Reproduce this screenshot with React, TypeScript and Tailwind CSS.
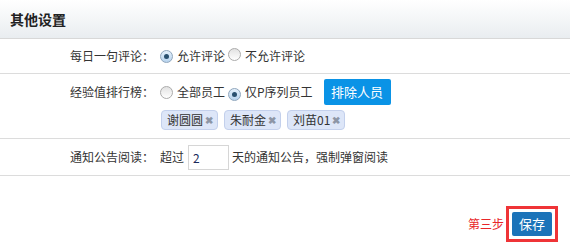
import React from "react";

const font = { fontFamily: '"Noto Sans CJK SC", "Liberation Sans", sans-serif' };

function Radio({ checked }: { checked?: boolean }) {
  return (
    <span
      className={
        checked
          ? "relative inline-flex h-[13px] w-[13px] shrink-0 items-center justify-center rounded-full border border-[#8fa6bd] bg-gradient-to-b from-[#e4f0fb] to-[#b8d4ee]"
          : "relative inline-flex h-[13px] w-[13px] shrink-0 items-center justify-center rounded-full border border-[#ababab] bg-gradient-to-b from-[#e2e2e2] to-white"
      }
    >
      {checked && <span className="h-[5px] w-[5px] rounded-full bg-[#29506f]" />}
    </span>
  );
}

function Tag({ name }: { name: string }) {
  return (
    <span className="inline-flex h-[20px] items-center rounded-[4px] border border-[#c3d0ec] bg-[#dde6f8] pl-[5px] pr-[4px] text-[12px] text-[#333]">
      {name}
      <span className="ml-[2px] text-[10px] font-bold leading-none text-[#8d96a6]">✖</span>
    </span>
  );
}

function Label({ children }: { children: React.ReactNode }) {
  return <div className="w-[154px] shrink-0 text-right">{children}</div>;
}

export default function App() {
  return (
    <div className="h-[248px] w-[570px] bg-white text-[12px] text-[#333]" style={font}>
      {/* header */}
      <div className="flex h-[39px] items-center border-b border-[#d8d8d8] bg-gradient-to-b from-white to-[#e9edf0] pl-[10px]">
        <span className="text-[14px] font-bold text-[#222]">其他设置</span>
      </div>

      {/* 每日一句评论 */}
      <div className="flex h-[35px] items-center border-b border-[#dcdcdc]">
        <Label>每日一句评论：</Label>
        <div className="ml-[6px] flex items-center">
          <Radio checked />
          <span className="ml-[4px]">允许评论</span>
          <span className="ml-[3px]"><Radio /></span>
          <span className="ml-[4px]">不允许评论</span>
        </div>
      </div>

      {/* 经验值排行榜 */}
      <div className="flex border-b border-[#dcdcdc] pb-[8px] pt-[5px]">
        <div className="flex h-[26px] items-center">
          <Label>经验值排行榜：</Label>
        </div>
        <div className="ml-[6px] flex flex-col gap-[5px]">
          <div className="flex h-[26px] items-center">
            <Radio />
            <span className="ml-[4px]">全部员工</span>
            <span className="ml-[3px]"><Radio checked /></span>
            <span className="ml-[4px]">仅P序列员工</span>
            <button className="ml-[11px] h-[26px] w-[67px] rounded-[2px] bg-[#0a93e6] text-[13px] text-white">
              排除人员
            </button>
          </div>
          <div className="flex gap-[6px] pl-[1px]">
            <Tag name="谢圆圆" />
            <Tag name="朱耐金" />
            <Tag name="刘苗01" />
          </div>
        </div>
      </div>

      {/* 通知公告阅读 */}
      <div className="flex h-[37px] items-center border-b border-[#dcdcdc]">
        <Label>通知公告阅读：</Label>
        <div className="ml-[6px] flex items-center">
          <span>超过</span>
          <input
            defaultValue="2"
            className="ml-[4px] h-[25px] w-[41px] border border-[#d6d6d6] px-[4px] text-[12px] text-[#1a2a5a] outline-none"
            style={font}
          />
          <span className="ml-[3px]">天的通知公告，强制弹窗阅读</span>
        </div>
      </div>

      {/* save */}
      <div className="flex items-center justify-end pr-[12px] pt-[30px]">
        <span className="mr-[2px] text-[12px] text-[#e8262a]">第三步</span>
        <div className="border-[3px] border-[#ef3437] p-[3px]">
          <button className="h-[24px] w-[40px] rounded-[2px] bg-[#1b73b9] text-[13px] text-white">保存</button>
        </div>
      </div>
    </div>
  );
}
